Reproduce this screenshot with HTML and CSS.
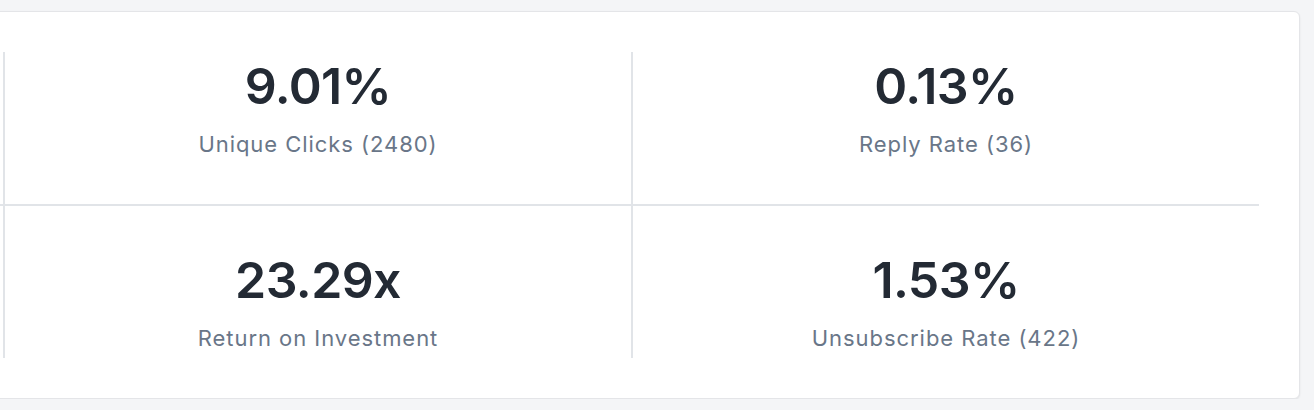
FILE: index.html
```html
<!DOCTYPE html>
<HTML>
   <HEAD>
      <TITLE>Campaign Stats</TITLE>
      <link rel="stylesheet" href="styles.css">
   </HEAD>
   <BODY>
      <DIV class='StatsCard'>
         <DIV class='StatsGrid'>
            <DIV class='Stat TopRow'></DIV>
            <DIV class='Stat TopRow'>
               <DIV class='StatValue'>9.01%</DIV>
               <DIV class='StatLabel'>Unique Clicks (2480)</DIV>
            </DIV>
            <DIV class='Stat TopRow LastCol'>
               <DIV class='StatValue'>0.13%</DIV>
               <DIV class='StatLabel'>Reply Rate (36)</DIV>
            </DIV>
            <DIV class='Stat BottomRow'></DIV>
            <DIV class='Stat BottomRow'>
               <DIV class='StatValue'>23.29x</DIV>
               <DIV class='StatLabel'>Return on Investment</DIV>
            </DIV>
            <DIV class='Stat BottomRow LastCol'>
               <DIV class='StatValue'>1.53%</DIV>
               <DIV class='StatLabel'>Unsubscribe Rate (422)</DIV>
            </DIV>
         </DIV>
      </DIV>
   </BODY>
</HTML>
```

FILE: styles.css
```css
BODY
{
   margin:      0;
   background:  #f4f5f7;
   font-family: Inter, 'Noto Sans', sans-serif;
}
.StatsCard
{
   margin:        11px 14px 0 -664px;
   padding:       40px;
   background:    #ffffff;
   border:        1px solid #e4e5e8;
   border-radius: 6px;
   box-shadow:    0 1px 2px rgba(0, 0, 0, 0.08);
}
.StatsGrid
{
   display:               grid;
   grid-template-columns: 628px 628px 1fr;
   grid-template-rows:    154px 152px;
}
.Stat
{
   display:        flex;
   flex-direction: column;
   align-items:    center;
   box-sizing:     border-box;
   border-right:   2px solid #e1e4e8;
}
.Stat.LastCol
{
   border-right: none;
}
.TopRow
{
   padding-top:   4px;
   border-bottom: 2px solid #e1e4e8;
}
.BottomRow
{
   padding-top: 44px;
}
.StatValue
{
   font-size:      50px;
   line-height:    60px;
   font-weight:    600;
   letter-spacing: -0.6px;
   color:          #232a34;
}
.StatLabel
{
   margin-top:     15px;
   font-size:      22px;
   line-height:    26px;
   letter-spacing: 0.95px;
   color:          #697688;
}
```
